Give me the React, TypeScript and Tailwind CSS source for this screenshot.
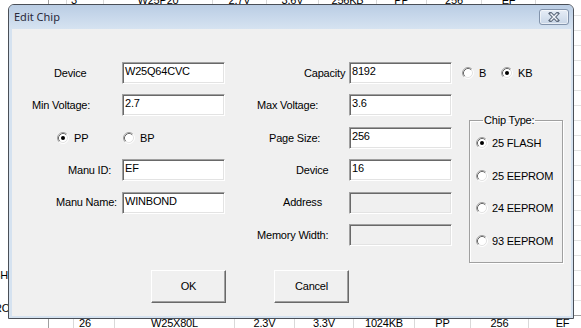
import { ReactNode } from "react";

const Radio = ({ checked = false }: { checked?: boolean }) => (
  <svg width="12" height="12" viewBox="0 0 12 12" className="shrink-0">
    <circle cx="6" cy="6" r="5" fill="#fff" />
    <path d="M2.11 9.89A5.5 5.5 0 0 1 9.89 2.11" fill="none" stroke="#a0a0a0" />
    <path d="M9.89 2.11A5.5 5.5 0 0 1 2.11 9.89" fill="none" stroke="#ffffff" />
    <path d="M2.82 9.18A4.5 4.5 0 0 1 9.18 2.82" fill="none" stroke="#696969" />
    <path d="M9.18 2.82A4.5 4.5 0 0 1 2.82 9.18" fill="none" stroke="#e3e3e3" />
    {checked && <circle cx="6" cy="6" r="2" fill="#000" />}
  </svg>
);

const Option = ({
  label,
  checked,
  className = "",
}: {
  label: string;
  checked?: boolean;
  className?: string;
}) => (
  <div className={`flex items-center whitespace-nowrap ${className}`}>
    <Radio checked={checked} />
    <span>{label}</span>
  </div>
);

const Label = ({ children, pad }: { children: ReactNode; pad: string }) => (
  <div className={`flex items-center whitespace-nowrap ${pad}`}>{children}</div>
);

const Field = ({ value = "", disabled }: { value?: string; disabled?: boolean }) => (
  <div
    className={`h-[22px] w-[103px] border border-t-[#a0a0a0] border-l-[#a0a0a0] border-b-white border-r-white shadow-[inset_1px_1px_0_#696969,inset_-1px_-1px_0_#e3e3e3] pl-[2px] pt-[1px] leading-[14px] ${
      disabled ? "bg-[#f0f0f0]" : "bg-white"
    }`}
  >
    {value}
  </div>
);

const Button = ({ children }: { children: ReactNode }) => (
  <button className="w-[75px] h-[33px] bg-[#f0f0f0] border border-t-white border-l-white border-b-[#696969] border-r-[#696969] shadow-[inset_-1px_-1px_0_#a0a0a0] text-black">
    {children}
  </button>
);

const Cell = ({ w, children, className = "" }: { w: string; children?: ReactNode; className?: string }) => (
  <div className={`shrink-0 h-full flex items-center justify-center border-r border-[#d9d9d9] whitespace-nowrap ${w} ${className}`}>
    {children}
  </div>
);

const midRows = Array.from({ length: 20 }, (_, i) => i);

export default function App() {
  return (
    <div className="relative w-[581px] h-[328px] overflow-hidden bg-white text-[11px] tracking-[-0.2px] text-black font-['Liberation_Sans',Arial,sans-serif]">
      {/* window behind the dialog */}
      <div className="flex h-full">
        <div className="w-[48px] shrink-0 flex flex-col pt-[268px]">
          <div className="w-[8px] h-[14px] flex justify-end items-center overflow-hidden whitespace-nowrap">
            25 FLASH
          </div>
          <div className="w-[19px] h-[14px] mt-[19px] flex justify-end items-center overflow-hidden whitespace-nowrap">
            93 EEPROM
          </div>
        </div>
        <div className="flex-1 flex flex-col border-l border-[#a0a0a0]">
          <div className="h-[15px] -mt-[7px] flex shrink-0">
            <Cell w="w-[18px]" />
            <Cell w="w-[37px]" className="justify-start pl-[4px]">3</Cell>
            <Cell w="w-[109px]">W25P20</Cell>
            <Cell w="w-[54px]">2.7V</Cell>
            <Cell w="w-[52px]">3.6V</Cell>
            <Cell w="w-[58px]">256KB</Cell>
            <Cell w="w-[50px]">PP</Cell>
            <Cell w="w-[55px]">256</Cell>
            <Cell w="w-[54px]">EF</Cell>
            <Cell w="w-[46px]" />
          </div>
          <div className="h-[7px] shrink-0" />
          {midRows.map((i) => (
            <div key={i} className="h-[15px] shrink-0 border-t border-[#e3e3e3]" />
          ))}
          <div className="h-[15px] shrink-0 flex border-t border-[#a0a0a0]">
            <Cell w="w-[25px]" />
            <Cell w="w-[41px]" className="justify-start pl-[5px]">26</Cell>
            <Cell w="w-[120px]">W25X80L</Cell>
            <Cell w="w-[60px]">2.3V</Cell>
            <Cell w="w-[59px]">3.3V</Cell>
            <Cell w="w-[61px]">1024KB</Cell>
            <Cell w="w-[56px]">PP</Cell>
            <Cell w="w-[58px]">256</Cell>
            <Cell w="w-[68px]">EF</Cell>
          </div>
        </div>
      </div>

      {/* dialog */}
      <div className="absolute left-[8px] top-[4px] w-[566px] h-[315px] border border-[#4a4f57] rounded-t-[6px] bg-[#d5e2f0] flex flex-col">
        <div className="h-[24px] shrink-0 rounded-t-[5px] bg-linear-to-b from-[#bacde4] to-[#d6e3f1] flex items-center justify-between pl-[5px] pr-[4px]">
          <span className="text-[11px] tracking-normal text-[#2a2a3a] font-['Noto_Sans','Segoe_UI',sans-serif]">
            Edit Chip
          </span>
          <div className="w-[30px] h-[16px] rounded-[3px] border border-[#8293ab] bg-linear-to-b from-[#e6edf6] to-[#c8d6e7] shadow-[inset_0_0_0_1px_rgba(255,255,255,0.55)] flex items-center justify-center">
            <svg width="12" height="10" viewBox="0 0 12 10">
              <path d="M2.5 1.5L9.5 8.5M9.5 1.5L2.5 8.5" stroke="#5d6a7c" strokeWidth="3.4" strokeLinecap="square" />
              <path d="M2.5 1.5L9.5 8.5M9.5 1.5L2.5 8.5" stroke="#f2f5fa" strokeWidth="1.4" />
            </svg>
          </div>
        </div>

        <div className="flex-1 ml-[3px] mr-[2px] mb-[2px] bg-[#f0f0f0] pt-[33px]">
          <div className="grid grid-cols-[110px_103px_124px_103px_1fr] grid-rows-[repeat(6,22px)] gap-y-[10.4px]">
            <Label pad="pl-[42px]">Device</Label>
            <Field value="W25Q64CVC" />
            <Label pad="pl-[79px]">Capacity</Label>
            <Field value="8192" />
            <div className="flex items-center pl-[10px]">
              <Option label="B" className="w-[39px] gap-[5px]" />
              <Option label="KB" checked className="gap-[5px]" />
            </div>

            <Label pad="pl-[20px]">Min Voltage:</Label>
            <Field value="2.7" />
            <Label pad="pl-[32px]">Max Voltage:</Label>
            <Field value="3.6" />
            <div />

            <div className="col-span-2 flex items-center pl-[45px]">
              <Option label="PP" checked className="w-[66px] gap-[5px]" />
              <Option label="BP" className="gap-[5px]" />
            </div>
            <Label pad="pl-[44px]">Page Size:</Label>
            <Field value="256" />
            <fieldset className="col-start-5 row-start-3 row-span-4 self-start -mt-[12.3px] ml-[17px] w-[94px] h-[148.5px] border border-[#a0a0a0] shadow-[inset_1px_1px_0_#fff,1px_1px_0_#fff] pl-[6px]">
              <legend className="ml-[7px] px-[1px] leading-[13px]">Chip Type:</legend>
              <div className="flex flex-col pt-[9px] gap-[18.5px]">
                <Option label="25 FLASH" checked className="h-[14px] gap-[4px]" />
                <Option label="25 EEPROM" className="h-[14px] gap-[4px]" />
                <Option label="24 EEPROM" className="h-[14px] gap-[4px]" />
                <Option label="93 EEPROM" className="h-[14px] gap-[4px]" />
              </div>
            </fieldset>

            <Label pad="pl-[56px]">Manu ID:</Label>
            <Field value="EF" />
            <Label pad="pl-[71px]">Device</Label>
            <Field value="16" />

            <Label pad="pl-[44px]">Manu Name:</Label>
            <Field value="WINBOND" />
            <Label pad="pl-[58px]">Address</Label>
            <Field disabled />

            <div className="col-span-2" />
            <Label pad="pl-[32px]">Memory Width:</Label>
            <Field disabled />
          </div>

          <div className="flex gap-[48px] ml-[139px] mt-[24px]">
            <Button>OK</Button>
            <Button>Cancel</Button>
          </div>
        </div>
      </div>
    </div>
  );
}
